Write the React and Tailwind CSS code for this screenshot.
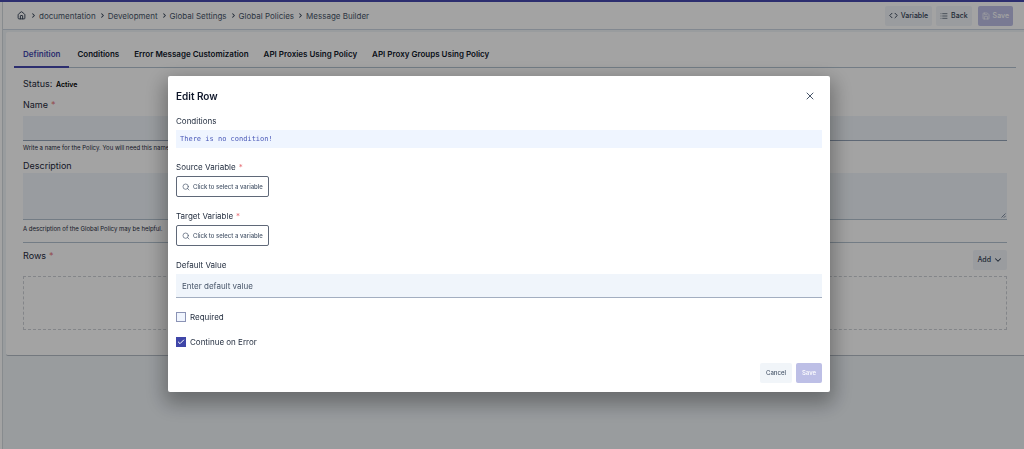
import { Fragment } from "react";
import { ChevronDown, ChevronRight, Code, House, List, Save, Search, X, Check } from "lucide-react";

const crumbs = ["documentation", "Development", "Global Settings", "Global Policies", "Message Builder"];
const tabs = [
  "Definition",
  "Conditions",
  "Error Message Customization",
  "API Proxies Using Policy",
  "API Proxy Groups Using Policy",
];

function Required() {
  return <span className="ml-[3px] text-[#e8757b]">*</span>;
}

function Header() {
  return (
    <header className="flex h-7 items-center justify-between border-b border-[#cbd5e1] bg-white pr-[11px] pl-[14px]">
      <nav aria-label="Breadcrumb" className="flex items-center gap-[3px] text-[8px] leading-3 text-[#475569]">
        <a href="#home" aria-label="Home" className="mr-px">
          <House className="size-[9px] text-[#334155]" strokeWidth={2.5} />
        </a>
        {crumbs.map((crumb) => (
          <Fragment key={crumb}>
            <ChevronRight className="size-[7px] text-[#334155]" strokeWidth={3.5} />
            <a href="#crumb" className="-ml-px">{crumb}</a>
          </Fragment>
        ))}
      </nav>
      <div className="flex items-center text-[7px] leading-3 font-medium">
        <button className="flex h-5 items-center gap-[3px] rounded-xs bg-[#f1f5f9] px-1 text-[#334155]">
          <Code className="size-[9px]" strokeWidth={2.5} />
          Variable
        </button>
        <button className="ml-1 flex h-5 items-center gap-[3px] rounded-xs bg-[#f1f5f9] px-1 text-[#334155]">
          <List className="size-2" strokeWidth={2} />
          Back
        </button>
        <button className="ml-[6px] flex h-5 items-center gap-[3px] rounded-xs bg-[#bdbfe6] px-1 text-white">
          <Save className="size-2" strokeWidth={2} />
          Save
        </button>
      </div>
    </header>
  );
}

function PolicyPage() {
  return (
    <main className="ml-[3px] rounded-l-xs border-b border-[#b4bcc6] bg-white pr-2 pb-[25px] pl-2">
      <div role="tablist" className="flex h-9 items-end gap-px border-b border-[#b4c3d0] text-[8px] leading-3 font-semibold text-[#0f172a]">
        {tabs.map((tab, i) => (
          <button
            key={tab}
            role="tab"
            aria-selected={i === 0}
            className={
              i === 0
                ? "-mb-px h-[27px] border-b-2 border-[#4649ae] px-[9px] text-[#4649ae]"
                : "-mb-px h-[27px] border-b-2 border-transparent px-[7px]"
            }
          >
            {tab}
          </button>
        ))}
      </div>
      <div className="pr-[9px] pl-[9px] text-[9px] leading-3 text-[#1e293b]">
        <p className="pt-[10px]">
          Status: <span className="ml-px text-[7px] font-semibold text-black">Active</span>
        </p>
        <label htmlFor="policy-name" className="mt-2 block">
          Name
          <Required />
        </label>
        <input id="policy-name" className="mt-[5px] block h-[25px] w-full border-b border-[#94a3b8] bg-[#f0f5fa] px-2 outline-none" />
        <p className="mt-px text-[6px] leading-3">Write a name for the Policy. You will need this name later.</p>
        <label htmlFor="policy-description" className="mt-[6px] block">
          Description
        </label>
        <div className="relative mt-px">
          <textarea
            id="policy-description"
            className="block h-[47px] w-full resize-none border-b border-[#b4c3d0] bg-[#f0f5fa] px-2 outline-none"
          />
          <svg viewBox="0 0 5 5" className="pointer-events-none absolute right-px bottom-[2px] size-[5px]" stroke="#64748b" strokeWidth="0.8">
            <path d="M0.5 4.5 4.5 0.5M2.8 4.7 4.7 2.8" />
          </svg>
        </div>
        <p className="mt-[3px] text-[6px] leading-3">A description of the Global Policy may be helpful.</p>
        <hr className="mt-[7px] border-[#b4c3d0]" />
        <div className="flex items-start justify-between pt-[7px]">
          <h2>
            Rows
            <Required />
          </h2>
          <button className="flex h-5 items-center gap-[2px] rounded-xs bg-[#f1f5f9] px-1 text-[7px] font-medium text-[#334155]">
            Add
            <ChevronDown className="size-[10px]" strokeWidth={2.5} />
          </button>
        </div>
        <div className="mt-[6px] h-[54px] border border-dashed border-[#cdd1d6]" />
      </div>
    </main>
  );
}

function VariablePicker({ id, label }) {
  return (
    <div>
      <label htmlFor={id} className="block leading-[10px]">
        {label}
        <Required />
      </label>
      <button
        id={id}
        className="mt-1 flex h-[21px] items-center gap-[3px] rounded-xs border border-[#5f6878] px-[5px] text-[6px] leading-3 font-medium text-[#475569]"
      >
        <Search className="size-2" strokeWidth={2} />
        Click to select a variable
      </button>
    </div>
  );
}

function CheckRow({ label, checked }) {
  return (
    <label className="flex h-[10px] items-center gap-1 self-start">
      <span className="relative flex size-[10px]">
        <input
          type="checkbox"
          defaultChecked={checked}
          className="peer size-[10px] appearance-none border border-[#8b93b5] bg-[#f0f5fe] checked:border-[#3f46a8] checked:bg-[#3f46a8]"
        />
        <Check className="pointer-events-none absolute inset-px hidden size-2 text-white peer-checked:block" strokeWidth={3} />
      </span>
      {label}
    </label>
  );
}

function EditRowDialog() {
  return (
    <div className="fixed inset-0 flex items-start bg-black/36 pt-[76px] pr-[194px] pl-[168px]">
      <section
        role="dialog"
        aria-modal="true"
        aria-labelledby="dialog-title"
        className="flex w-full flex-col gap-[14px] rounded-xs bg-white px-2 pt-2 pb-[9px] text-[8px] leading-[10px] text-[#1e293b] shadow-[0_8px_20px_4px_rgba(0,0,0,0.32)]"
      >
        <div>
          <div className="flex h-6 items-center justify-between">
            <h1 id="dialog-title" className="text-[10px] font-semibold text-[#0f172a]">
              Edit Row
            </h1>
            <button aria-label="Close" className="flex size-6 items-center justify-center">
              <X className="size-3 text-[#475569]" strokeWidth={2} />
            </button>
          </div>
          <h2 className="mt-2">Conditions</h2>
          <code className="mt-1 flex h-[18px] items-center bg-[#eff5ff] px-1 font-['DejaVu_Sans_Mono',monospace] text-[7px] text-[#4a59b8]">
            There is no condition!
          </code>
        </div>
        <VariablePicker id="source-variable" label="Source Variable" />
        <VariablePicker id="target-variable" label="Target Variable" />
        <div>
          <label htmlFor="default-value" className="block leading-[10px]">
            Default Value
          </label>
          <input
            id="default-value"
            placeholder="Enter default value"
            className="mt-1 block h-6 w-full border-b border-[#a3aec0] bg-[#f0f5fb] px-[6px] outline-none placeholder:text-[#475569]"
          />
        </div>
        <div className="flex flex-col gap-[15px]">
          <CheckRow label="Required" />
          <CheckRow label="Continue on Error" checked />
        </div>
        <div className="mt-[2px] flex justify-end gap-1 text-[6px] font-medium">
          <button className="h-5 rounded-xs bg-[#f1f5f9] px-[6px] text-[#475569]">Cancel</button>
          <button className="h-5 rounded-xs bg-[#bdbfe6] px-[6px] text-white">Save</button>
        </div>
      </section>
    </div>
  );
}

export default function App() {
  return (
    <div className="flex min-h-screen flex-col border-t-2 border-[#4649ae] bg-[#eff4f8] font-[Inter,sans-serif]">
      <div className="flex grow">
        <aside className="w-[3px] shrink-0 border-r border-[#d3d9df] bg-white" />
        <div className="flex min-w-0 grow flex-col gap-[2px]">
          <Header />
          <PolicyPage />
        </div>
      </div>
      <EditRowDialog />
    </div>
  );
}
